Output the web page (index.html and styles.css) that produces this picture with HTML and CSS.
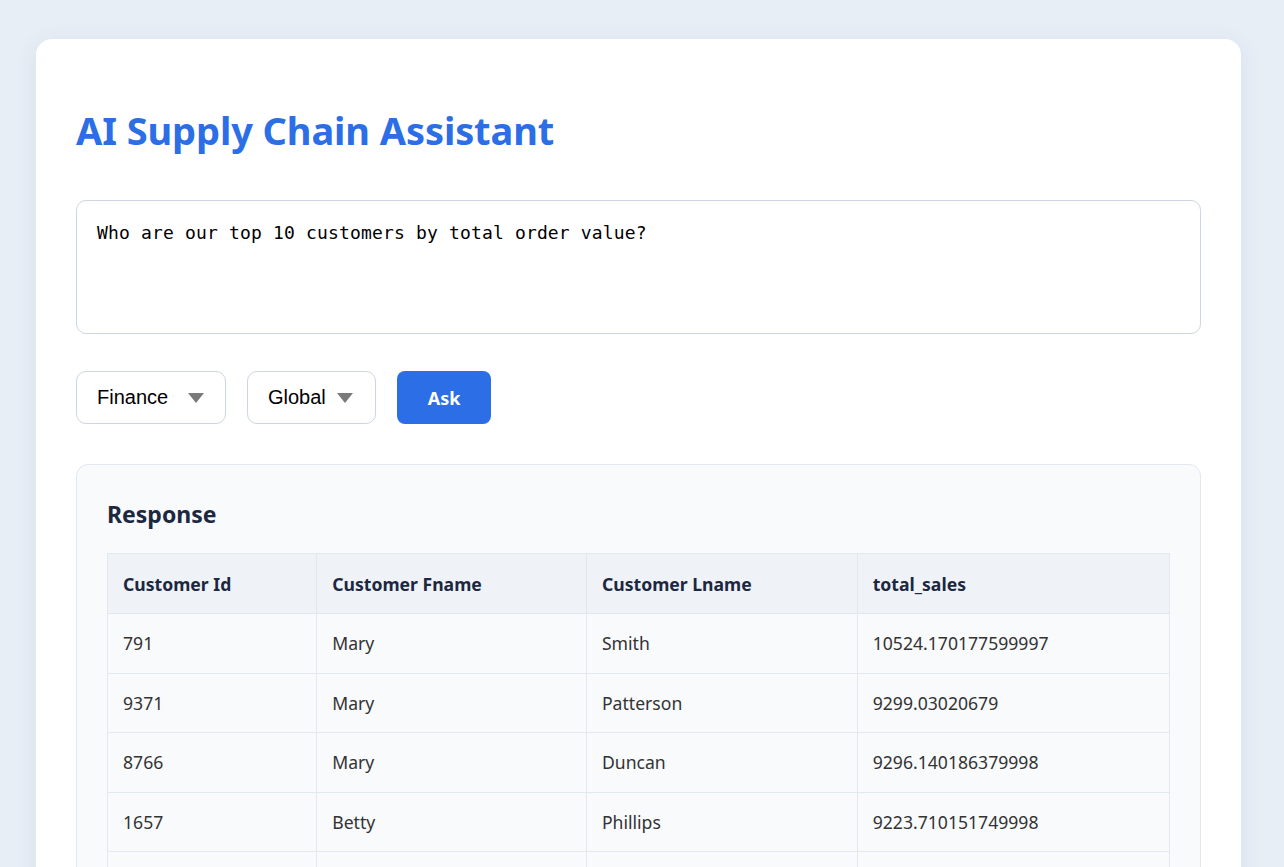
FILE: index.html
```html
<!DOCTYPE html>
<html lang="en">
<head>
<meta charset="utf-8">
<title>AI Supply Chain Assistant</title>
<link rel="stylesheet" href="styles.css">
</head>
<body>
<main class="card">
  <h1 class="title">AI Supply Chain Assistant</h1>
  <textarea class="query">Who are our top 10 customers by total order value?</textarea>
  <div class="controls">
    <div class="select select-dept">
      <span class="select-label">Finance</span>
      <svg class="caret" width="16" height="10" viewBox="0 0 16 10"><path d="M0 0H16L8 10Z" fill="#7a7a7a"/></svg>
    </div>
    <div class="select select-region">
      <span class="select-label">Global</span>
      <svg class="caret" width="16" height="10" viewBox="0 0 16 10"><path d="M0 0H16L8 10Z" fill="#7a7a7a"/></svg>
    </div>
    <button class="ask">Ask</button>
  </div>
  <section class="response">
    <h2 class="response-title">Response</h2>
    <table class="results">
      <colgroup>
        <col class="c1"><col class="c2"><col class="c3"><col class="c4">
      </colgroup>
      <thead>
        <tr><th>Customer Id</th><th>Customer Fname</th><th>Customer Lname</th><th>total_sales</th></tr>
      </thead>
      <tbody>
        <tr><td>791</td><td>Mary</td><td>Smith</td><td>10524.170177599997</td></tr>
        <tr><td>9371</td><td>Mary</td><td>Patterson</td><td>9299.03020679</td></tr>
        <tr><td>8766</td><td>Mary</td><td>Duncan</td><td>9296.140186379998</td></tr>
        <tr><td>1657</td><td>Betty</td><td>Phillips</td><td>9223.710151749998</td></tr>
        <tr><td>3710</td><td>Ashley</td><td>Smith</td><td>9138.820179849998</td></tr>
      </tbody>
    </table>
  </section>
</main>
</body>
</html>
```
FILE: styles.css
```css
html, body {
  margin: 0;
  padding: 0;
}
body {
  background: #e8eef6;
  font-family: "Noto Sans", "Open Sans", sans-serif;
  padding-top: 39px;
  padding-left: 36px;
  overflow: hidden;
}
.card {
  width: 1205px;
  box-sizing: border-box;
  background: #ffffff;
  border-radius: 16px;
  box-shadow: 0 4px 24px rgba(30, 60, 110, 0.08);
  padding: 56px 40px 40px 40px;
}
.title {
  margin: 0 0 35px 0;
  font-size: 38px;
  font-weight: 700;
  line-height: 70px;
  color: #2b6ee6;
  letter-spacing: -0.1px;
}
.query {
  display: block;
  width: 100%;
  height: 134px;
  box-sizing: border-box;
  border: 1px solid #cdd6e2;
  border-radius: 10px;
  padding: 20px;
  font-family: "DejaVu Sans Mono", monospace;
  font-size: 18px;
  letter-spacing: 0.16px;
  line-height: 24px;
  color: #000;
  resize: none;
  outline: none;
  margin: 0;
}
.controls {
  display: flex;
  gap: 21px;
  margin-top: 37px;
}
.select {
  height: 53px;
  box-sizing: border-box;
  border: 1px solid #cdd6e2;
  border-radius: 10px;
  display: flex;
  align-items: center;
  padding: 0 20px;
  font-family: "Liberation Sans", Arial, sans-serif;
  font-size: 20px;
  color: #000;
}
.select-dept { width: 150px; justify-content: space-between; padding-right: 21px; }
.select-region { width: 129px; justify-content: space-between; padding-right: 22px; }
.caret { display: block; }
.ask {
  height: 53px;
  width: 94px;
  border: none;
  border-radius: 8px;
  background: #2b6ee6;
  color: #fff;
  font-family: "Noto Sans", sans-serif;
  font-size: 18px;
  font-weight: 700;
  padding: 0;
}
.response {
  margin-top: 40px;
  background: #f8fafc;
  border: 1px solid #e2e8f0;
  border-radius: 12px;
  padding: 30px 30px 30px 30px;
}
.response-title {
  margin: 0 0 20px 0;
  font-size: 23px;
  font-weight: 700;
  line-height: 38px;
  color: #1c2740;
}
.results {
  width: 100%;
  border-collapse: collapse;
  font-size: 17.6px;
}
.c1 { width: 19.7%; }
.c2 { width: 25.4%; }
.c3 { width: 25.5%; }
.c4 { width: 29.4%; }
.results th, .results td {
  border: 1px solid #e2e8f0;
  padding: 0 15px;
  text-align: left;
}
.results th {
  height: 59px;
  background: #eff3f8;
  color: #1c2740;
  font-weight: 700;
}
.results td {
  height: 58.5px;
  color: #333;
  font-weight: 400;
}
```
